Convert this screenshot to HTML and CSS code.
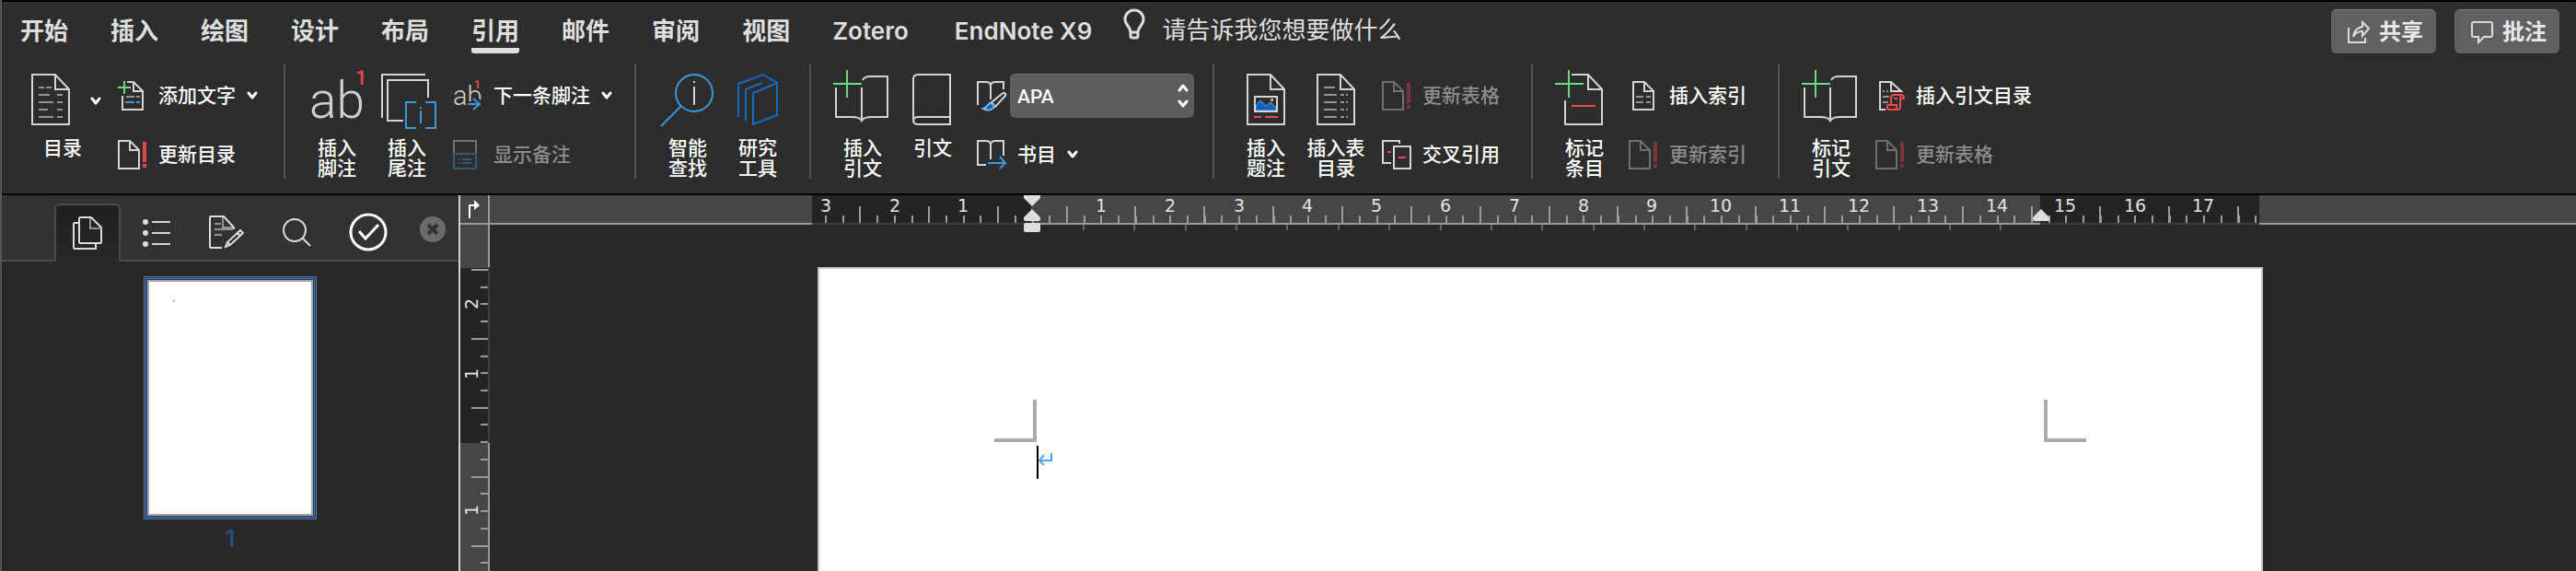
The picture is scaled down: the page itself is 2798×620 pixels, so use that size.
FILE: index.html
```html
<!DOCTYPE html>
<html lang="zh-CN">
<head>
<meta charset="utf-8">
<title>文档</title>
<link rel="stylesheet" href="styles.css">
</head>
<body>
<svg class="defs" aria-hidden="true">
  <symbol id="chevron" viewBox="0 0 12 10"><path class="chev" d="M2 2L6 7L10 2"/></symbol>
  <symbol id="doc-small" viewBox="0 0 32 32"><path class="ln" d="M1 1H13L23 11V31H1Z M13 1V11H23"/><path class="bang" d="M27 2h4v22h-4z M27 26h4v4h-4z"/></symbol>
  <symbol id="book-plus" viewBox="0 0 64 80"><path class="ln" d="M32 17Q34 13 40 13H59V57H42Q33 57 31 61Q29 57 20 57H3V25 M31 25V61"/><path class="green" d="M0 21H31 M15 6V36"/></symbol>
</svg>

<div class="app">
  <header class="ribbon">
    <div class="tabbar">
      <nav class="tabs">
        <button class="tab">开始</button>
        <button class="tab">插入</button>
        <button class="tab">绘图</button>
        <button class="tab">设计</button>
        <button class="tab">布局</button>
        <button class="tab active">引用</button>
        <button class="tab">邮件</button>
        <button class="tab">审阅</button>
        <button class="tab">视图</button>
        <button class="tab">Zotero</button>
        <button class="tab addin">EndNote X9</button>
      </nav>
      <button class="tellme">
        <svg width="24" height="34" viewBox="0 0 24 34"><path class="bulb" d="M8 25C8 19 2 17 2 11A10 10 0 0 1 22 11C22 17 16 19 16 25V29Q16 31 14 31H10Q8 31 8 29Z M8 25H16"/></svg>
        <span>请告诉我您想要做什么</span>
      </button>
      <div class="actions">
        <button class="action">
          <svg width="24" height="26" viewBox="0 0 24 26"><path class="thin" d="M1 8V24H19V19 M6 18C7 11 10 8 16 7V2L23 9L16 17V12C11 12 8 14 6 18Z"/></svg>
          <span>共享</span>
        </button>
        <button class="action">
          <svg width="24" height="26" viewBox="0 0 24 26"><path class="thin" d="M3 2H21Q23 2 23 4V16Q23 18 21 18H14L8 24V18H3Q1 18 1 16V4Q1 2 3 2Z"/></svg>
          <span>批注</span>
        </button>
      </div>
    </div>

    <div class="groups">
      <section class="group first">
        <button class="big toc">
          <span class="big-row">
            <svg width="42" height="80" viewBox="0 0 42 80"><path class="ln" d="M1 11H26L41 27V65H1Z M26 11V27H41"/><path class="gray" d="M8 25H14M16 25H22M8 33H20M28 33H34M8 41H24M28 41H34M8 49H18M28 49H34M8 57H24M28 57H34"/></svg>
            <svg width="12" height="10"><use href="#chevron"/></svg>
          </span>
          <span class="label">目录</span>
        </button>
        <div class="stack">
          <button class="small">
            <svg width="32" height="32" viewBox="0 0 32 32"><path class="ln" d="M10 1H17L27 11V31H5V16 M17 1V11H27"/><path class="gray" d="M9 17H18M20 17H24"/><path class="blue" d="M8 23H18M20 23H24"/><path class="green" d="M0 7H14M7 0V14"/></svg>
            <span>添加文字</span>
            <svg width="12" height="10"><use href="#chevron"/></svg>
          </button>
          <button class="small">
            <svg width="32" height="32"><use href="#doc-small"/></svg>
            <span>更新目录</span>
          </button>
        </div>
      </section>

      <section class="group">
        <button class="big">
          <svg width="64" height="80" viewBox="0 0 64 80"><text class="ab" x="2" y="58" font-size="55">ab</text><text class="sup" x="52" y="22" font-size="22">1</text></svg>
          <span class="label">插入<br>脚注</span>
        </button>
        <button class="big">
          <svg width="64" height="80" viewBox="0 0 64 80"><path class="ln" d="M5 58V11H52 M28 61H11V17H55V36"/><path class="blue" d="M42 41H31V69H42 M52 41H63V69H52 M47 46v2 M47 50v14"/></svg>
          <span class="label">插入<br>尾注</span>
        </button>
        <div class="stack">
          <button class="small">
            <svg width="32" height="32" viewBox="0 0 32 32"><text class="ab" x="0" y="26" font-size="29">ab</text><path class="cut" d="M14 25H30M23 18L30 25L23 32"/><text class="sup bold" x="23" y="8" font-size="12">1</text><path class="blue" d="M16 25H29M22 19L29 25L22 31"/></svg>
            <span>下一条脚注</span>
            <svg width="12" height="10"><use href="#chevron"/></svg>
          </button>
          <button class="small" disabled>
            <svg width="32" height="32" viewBox="0 0 32 32"><path class="ln" d="M1 14V1H25V14"/><path class="blue" d="M1 15H25V31H1Z M6 21H8M10 21H20M6 25H8M10 25H20"/></svg>
            <span>显示备注</span>
          </button>
        </div>
      </section>

      <section class="group">
        <button class="big">
          <svg width="64" height="80" viewBox="0 0 64 80"><circle class="blue" cx="39" cy="31" r="20"/><path class="blue" d="M25 45L3 67"/><path class="ln" d="M39 18v2 M39 24V44"/></svg>
          <span class="label">智能<br>查找</span>
        </button>
        <button class="big">
          <svg width="64" height="80" viewBox="0 0 64 80"><path class="deep" d="M27 31L53 20V55L27 65Z M19 61V27L37 20 M11 57V21L38 11L53 20"/></svg>
          <span class="label">研究<br>工具</span>
        </button>
      </section>

      <section class="group snug">
        <button class="big">
          <svg width="64" height="80"><use href="#book-plus"/></svg>
          <span class="label">插入<br>引文</span>
        </button>
        <button class="big">
          <svg width="64" height="80" viewBox="0 0 64 80"><path class="ln" d="M51 11H16Q11 11 11 16V60Q11 65 16 65H51Z M11 62Q11 57 16 57H51"/></svg>
          <span class="label">引文</span>
        </button>
        <div class="stack tight">
          <div class="style-row">
            <svg width="32" height="32" viewBox="0 0 32 32"><path class="ln" d="M1 26V1H10Q14 1 15 4Q16 1 20 1H29V9 M15 4V20"/><path class="brush" d="M30 13Q32 14 31 16L20 28L15 24L27 14Q29 12 30 13Z"/><path class="paint" d="M7 30Q10 29 12 26Q14 23 18 25Q20 28 17 30Q13 33 7 30Z"/></svg>
            <span class="picker">
              <select aria-label="引文样式"><option>APA</option></select>
              <svg class="steppers" width="14" height="28" viewBox="0 0 14 28"><path class="chev" d="M3 8L7 3L11 8M3 20L7 25L11 20"/></svg>
            </span>
          </div>
          <button class="small">
            <svg width="32" height="32" viewBox="0 0 32 32"><path class="ln" d="M10 27H1V1H10Q14 1 15 4Q16 1 20 1H29V17 M15 4V21"/><path class="blue" d="M12 25H31M25 18L31 25L25 31"/></svg>
            <span>书目</span>
            <svg width="12" height="10"><use href="#chevron"/></svg>
          </button>
        </div>
      </section>

      <section class="group wide">
        <button class="big">
          <svg width="42" height="80" viewBox="0 0 42 80"><path class="ln" d="M1 11H26L41 27V65H1Z M26 11V27H41"/><path class="mount" d="M10 50V45L15 39L21 45L26 41L32 47V50Z"/><rect class="sun" x="26" y="37" width="3" height="3"/><rect class="ln" x="9" y="35" width="24" height="16"/><path class="red" d="M8 57H16M20 57H34"/></svg>
          <span class="label">插入<br>题注</span>
        </button>
        <button class="big">
          <svg width="42" height="80" viewBox="0 0 42 80"><path class="ln" d="M1 11H26L41 27V65H1Z M26 11V27H41"/><path class="gray" d="M8 25H20M8 33H22M26 33H30M32 33H34M8 41H22M26 41H30M32 41H34M8 49H22M26 49H30M32 49H34M8 57H22M26 57H30M32 57H34"/></svg>
          <span class="label">插入表<br>目录</span>
        </button>
        <div class="stack">
          <button class="small" disabled>
            <svg width="32" height="32"><use href="#doc-small"/></svg>
            <span>更新表格</span>
          </button>
          <button class="small">
            <svg width="32" height="32" viewBox="0 0 32 32"><path class="ln" d="M10 25H1V1H19V4 M13 7H31V31H13Z"/><path class="red" d="M6 13H10M18 19H26"/></svg>
            <span>交叉引用</span>
          </button>
        </div>
      </section>

      <section class="group wide">
        <button class="big">
          <svg width="64" height="80" viewBox="0 0 64 80"><path class="ln" d="M18 11H36L51 27V65H11V39 M36 11V27H51"/><path class="red" d="M18 45H44"/><path class="green" d="M0 21H31 M15 6V36"/></svg>
          <span class="label">标记<br>条目</span>
        </button>
        <div class="stack tight">
          <button class="small">
            <svg width="32" height="32" viewBox="0 0 32 32"><path class="ln" d="M5 1H17L27 11V31H5Z M17 1V11H27"/><path class="gray" d="M8 17H16M19 17H24M8 23H16M19 23H24"/></svg>
            <span>插入索引</span>
          </button>
          <button class="small" disabled>
            <svg width="32" height="32"><use href="#doc-small"/></svg>
            <span>更新索引</span>
          </button>
        </div>
      </section>

      <section class="group">
        <button class="big">
          <svg width="64" height="80"><use href="#book-plus"/></svg>
          <span class="label">标记<br>引文</span>
        </button>
        <div class="stack tight">
          <button class="small">
            <svg width="32" height="32" viewBox="0 0 32 32"><path class="ln" d="M11 31H5V1H17L28 11H17V1"/><path class="gray" d="M8 11H10M12 11H14M8 17H15M8 23H14"/><path class="red" d="M17 25V18Q17 15 20 15H28Q31 15 31 18V19H27V28Q27 31 24 31H15Q13 31 13 29V26H23V28Q23 31 25 31M27 19V17Q27 15 29 15M20 19H24"/></svg>
            <span>插入引文目录</span>
          </button>
          <button class="small" disabled>
            <svg width="32" height="32"><use href="#doc-small"/></svg>
            <span>更新表格</span>
          </button>
        </div>
      </section>
    </div>
  </header>

  <main class="body">
    <aside class="pane">
      <div class="pane-tabs">
        <button class="pane-tab selected" aria-label="缩略图">
          <svg width="34" height="38" viewBox="0 0 34 38"><path class="thin" d="M7 8H3Q2 8 2 9V35Q2 36 3 36H26V31"/><path class="thin" d="M9 2H21L32 13V29Q32 30 31 30H9Q8 30 8 29V3Q8 2 9 2Z"/><path class="gray" d="M20 3V14H32"/></svg>
        </button>
        <div class="pane-tools">
          <button aria-label="标题"><svg width="30" height="32" viewBox="0 0 30 32"><path class="ln" d="M10 5H30M10 17H30M10 29H30"/><g class="dot"><circle cx="3" cy="5" r="3"/><circle cx="3" cy="17" r="3"/><circle cx="3" cy="29" r="3"/></g></svg></button>
          <button aria-label="修订"><svg width="38" height="38" viewBox="0 0 38 38"><path class="gray" d="M6 10H13M6 16H26M6 22H14M15 3V14H26"/><path class="faint" d="M6 28H14"/><path class="thin" d="M14 36H3Q1 36 1 35V3Q1 2 2 2H16L27 14V16"/><path class="thin" d="M34 17L37 20L23 33L18 35L20 30ZM31 20L34 23M20 30L23 33"/></svg></button>
          <button aria-label="查找"><svg width="30" height="32" viewBox="0 0 30 32"><circle class="thin" cx="13" cy="14" r="12"/><path class="thin" d="M22 23L30 31"/></svg></button>
          <button aria-label="校对"><svg width="42" height="42" viewBox="0 0 42 42"><circle class="check" cx="21" cy="21" r="19"/><path class="check" d="M11 20L18 28L32 13"/></svg></button>
        </div>
        <button class="pane-close" aria-label="关闭"><svg width="28" height="28" viewBox="0 0 28 28"><circle class="close-bg" cx="14" cy="14" r="14"/><path class="close-x" d="M9 9L19 19M19 9L9 19"/></svg></button>
      </div>
      <div class="thumbs">
        <div class="thumb"><span class="thumb-mark"></span></div>
        <span class="thumb-no">1</span>
      </div>
    </aside>

    <div class="vruler">
      <button class="tabstop" aria-label="制表符"><svg width="14" height="22" viewBox="0 0 14 22"><path class="stem" d="M2 21V7H8"/><path class="head" d="M7 1L13 7L7 12Z"/></svg></button>
      <svg class="vscale" width="32" height="376" viewBox="0 0 32 376">
        <rect class="light" width="32" height="376"/>
        <rect class="edge" x="30" width="2" height="376"/>
        <rect class="dark" y="47" width="30" height="190"/>
        <rect class="dark-edge" x="30" y="46" width="2" height="191"/>
        <path class="tick" stroke-width="8" stroke-dasharray="2 16.72" d="M26 48V376"/>
        <path class="tick" stroke-width="18" stroke-dasharray="2 72.88" d="M21 48V376"/>
        <g class="num"><text transform="translate(19 86) rotate(-90)">2</text><text transform="translate(19 162) rotate(-90)">1</text><text transform="translate(19 310) rotate(-90)">1</text></g>
      </svg>
    </div>

    <div class="work">
      <div class="hruler">
        <svg width="1572" height="42" viewBox="0 0 1572 42">
          <rect class="light" width="1572" height="30"/>
          <rect class="edge" y="30" width="1572" height="2"/>
          <rect class="dark" width="238" height="30"/>
          <rect class="dark" x="1334" width="238" height="30"/>
          <rect class="dark-edge" y="30" width="238" height="2"/>
          <rect class="dark-edge" x="1334" y="30" width="238" height="2"/>
          <path class="tick" stroke-width="8" stroke-dasharray="2 16.714" d="M14 26H1570"/>
          <path class="tick" stroke-width="18" stroke-dasharray="2 72.857" d="M51 21H1570"/>
          <path class="tick low" stroke-width="6" stroke-dasharray="2 53.36" d="M294 35H1294"/>
          <g class="num">
            <text x="15" y="18">3</text><text x="90" y="18">2</text><text x="164" y="18">1</text>
            <text x="314" y="18">1</text><text x="389" y="18">2</text><text x="464" y="18">3</text><text x="538" y="18">4</text><text x="613" y="18">5</text><text x="688" y="18">6</text><text x="763" y="18">7</text><text x="838" y="18">8</text><text x="912" y="18">9</text><text x="987" y="18">10</text><text x="1062" y="18">11</text><text x="1137" y="18">12</text><text x="1212" y="18">13</text><text x="1287" y="18">14</text><text x="1361" y="18">15</text><text x="1437" y="18">16</text><text x="1511" y="18">17</text>
          </g>
          <path class="marker" d="M230 0H248V3L239 12L230 3Z M239 15L248 24V26Q248 28 246 28H232Q230 28 230 26V24Z M232 30H246Q248 30 248 32V38Q248 40 246 40H232Q230 40 230 38V32Q230 30 232 30Z M1335 15L1344 24V26Q1344 28 1342 28H1328Q1326 28 1326 26V24Z"/>
        </svg>
      </div>
      <div class="canvas">
        <article class="paper">
          <div class="corners"><span class="corner left"></span><span class="corner right"></span></div>
          <div class="line"><span class="caret"></span><svg width="16" height="18" viewBox="0 0 16 18"><path class="ret" d="M14 2V10H1M6 4L1 10L6 15"/></svg></div>
        </article>
      </div>
    </div>
  </main>
</div>
</body>
</html>
```
FILE: styles.css
```css
* { box-sizing: border-box; }
body {
  margin: 0;
  background: #282828;
  color: #fff;
  font-family: Inter, "Noto Sans CJK SC", sans-serif;
}
button {
  margin: 0;
  padding: 0;
  border: 0;
  background: none;
  color: inherit;
  font: inherit;
}
svg { display: block; flex: none; fill: none; overflow: visible; }
.defs { position: absolute; width: 0; height: 0; }

.app {
  display: flex;
  flex-direction: column;
  height: 100vh;
  border-left: 2px solid #555;
  overflow: hidden;
}

/* icon strokes */
.ln { stroke: #d4d4d4; stroke-width: 2; }
.thin { stroke: #dcdcdc; stroke-width: 2; }
.gray { stroke: #939393; stroke-width: 2; }
.faint { stroke: #262626; stroke-width: 2; }
.blue { stroke: #3a9ade; stroke-width: 2; }
.deep { stroke: #156bbe; stroke-width: 2; }
.green { stroke: #6ddb82; stroke-width: 2; }
.red { stroke: #ec4a4d; stroke-width: 2; }
.cut { stroke: #2d2d2d; stroke-width: 6; }
.bang { fill: #e64548; }
.bulb { stroke: #dcdcdc; stroke-width: 3; }
.chev { stroke: #fff; stroke-width: 3; stroke-linecap: round; stroke-linejoin: round; }
.brush { fill: #2d2d2d; stroke: #d4d4d4; stroke-width: 2; }
.paint { fill: #0a64b8; stroke: #83bdf0; stroke-width: 2; }
.mount { fill: #0a64b8; stroke: #5ea9ea; stroke-width: 1; }
.sun { fill: #e8a04a; }
.ab { fill: #cfcfcf; font-family: Roboto, sans-serif; font-weight: 300; }
.sup { fill: #e64548; font-family: Roboto, sans-serif; }
.sup.bold { font-weight: 700; }
.dot { fill: #dcdcdc; }
.check { stroke: #fff; stroke-width: 3; }
.close-bg { fill: #6b6b6b; }
.close-x { stroke: #323232; stroke-width: 4; }

/* ribbon */
.ribbon {
  background: #2d2d2d;
  border-top: 2px solid #000;
  border-bottom: 2px solid #000;
  height: 212px;
  flex: none;
}
.tabbar {
  display: flex;
  align-items: flex-start;
  height: 68px;
  padding: 8px 18px 0 20px;
  color: #dedede;
}
.tabs { display: flex; gap: 46px; }
.tab {
  height: 48px;
  font-size: 26px;
  line-height: 46px;
  font-weight: 600;
  white-space: nowrap;
}
.tab.active {
  background: linear-gradient(#dedede, #dedede) bottom / 100% 6px no-repeat;
  border-radius: 3px;
}
.tab.addin { margin-left: 4px; }
.tellme {
  display: flex;
  align-items: flex-start;
  gap: 18px;
  margin-left: 34px;
  font-size: 26px;
  line-height: 46px;
}
.actions { display: flex; gap: 20px; margin-left: auto; }
.action {
  display: flex;
  align-items: center;
  gap: 10px;
  height: 48px;
  padding: 0 14px 0 18px;
  border-top: 1px solid #7c7c7c;
  border-radius: 6px;
  background: #616161;
  font-size: 24px;
  font-weight: 600;
  line-height: 46px;
  color: #e8e8e8;
}

.groups { display: flex; font-size: 21px; font-weight: 500; }
.group {
  display: flex;
  gap: 12px;
  height: 124px;
  padding: 0 24px;
  border-left: 2px solid #565656;
}
.group.first { padding: 0 28px 0 32px; border-left: 0; }
.group.snug { padding-right: 20px; }
.group.wide { padding-right: 34px; }
.big {
  display: flex;
  flex-direction: column;
  align-items: center;
  justify-content: flex-start;
  width: 64px;
  white-space: nowrap;
}
.big.toc { width: 76px; }
.big.toc .label { padding-right: 8px; }
.big-row { display: flex; align-items: center; gap: 22px; }
.label { line-height: 22px; text-align: center; }
.stack {
  display: flex;
  flex-direction: column;
  gap: 16px;
  padding: 10px 0 0 6px;
}
.stack.tight { padding-left: 4px; }
.small, .style-row {
  display: flex;
  align-items: center;
  height: 48px;
  white-space: nowrap;
}
.small { gap: 12px; line-height: 22px; }
.small:disabled { color: #8c8c8c; }
.small:disabled svg { opacity: 0.4; }
.style-row { gap: 4px; }
.picker { position: relative; }
.picker select {
  appearance: none;
  width: 200px;
  height: 48px;
  padding: 0 8px;
  border: 0;
  border-top: 1px solid #757575;
  border-radius: 6px;
  background: #5d5d5d;
  color: #fff;
  font: 500 21px Roboto, sans-serif;
}
.steppers { position: absolute; right: 5px; top: 10px; pointer-events: none; }

/* body */
.body { display: flex; flex: 1; min-height: 0; }
.pane { width: 498px; flex: none; border-right: 2px solid #cfcfcf; }
.pane-tabs {
  display: flex;
  height: 72px;
  padding: 9px 14px 0 57px;
  background: #323232;
  border-bottom: 2px solid #4a4a4a;
}
.pane-tab {
  display: flex;
  justify-content: center;
  width: 72px;
  margin-bottom: -2px;
  padding-top: 11px;
}
.pane-tab.selected {
  border: 2px solid #4a4a4a;
  border-bottom: 0;
  border-radius: 6px 6px 0 0;
  background: linear-gradient(#1f1f1f, #282828);
}
.pane-tools { display: flex; align-items: center; gap: 42px; margin-left: 24px; }
.pane-close { margin-left: auto; align-self: center; padding-bottom: 6px; }
.thumbs { display: flex; flex-direction: column; align-items: center; padding-top: 20px; }
.thumb {
  width: 180px;
  height: 256px;
  padding: 20px 26px;
  border: 2px solid #a2a6ae;
  background: #fff;
  box-shadow: 0 0 0 1px #2b3648, 0 0 0 2px #4a78b5, 0 0 0 3px #2b3648, 0 0 0 4px #4a78b5;
}
.thumb-mark { display: block; width: 2px; height: 2px; background: #8cc4f5; }
.thumb-no { margin-top: 12px; font-size: 26px; line-height: 26px; font-weight: 600; color: #264f80; }

/* rulers */
.light { fill: #464646; }
.dark { fill: #242424; }
.edge { fill: #989898; }
.dark-edge { fill: #3c3c3c; }
.tick { stroke: #9b9b9f; shape-rendering: crispEdges; }
.tick.low { stroke: #666; }
.num { fill: #e2e2e2; font: 19px "DejaVu Sans", sans-serif; text-anchor: middle; }
.marker { fill: #dedede; }
.stem { stroke: #fff; stroke-width: 2; }
.head { fill: #fff; }

.vruler { width: 32px; flex: none; }
.tabstop {
  display: flex;
  justify-content: center;
  width: 100%;
  height: 32px;
  padding-top: 4px;
  background: #464646;
  border-right: 2px solid #989898;
  border-bottom: 2px solid #989898;
}
.work { display: flex; flex-direction: column; flex: 1; min-width: 0; }
.hruler {
  display: flex;
  justify-content: center;
  height: 42px;
  padding-left: 6px;
  background: linear-gradient(#464646 30px, #989898 30px, #989898 32px, #282828 32px);
}
.canvas {
  display: flex;
  justify-content: center;
  flex: 1;
  min-height: 0;
  padding: 36px 0 0 16px;
}
.paper {
  flex: 0 1 1570px;
  padding-top: 142px;
  border: 2px solid #c4c4c4;
  border-bottom: 0;
  background: #fff;
}
.corners { display: flex; justify-content: space-between; padding: 0 190px; }
.corner { width: 46px; height: 46px; border-bottom: 4px solid #ababab; }
.corner.left { border-right: 4px solid #ababab; }
.corner.right { border-left: 4px solid #ababab; }
.line { display: flex; padding: 4px 0 0 236px; }
.line svg { margin-top: 6px; }
.caret { width: 2px; height: 36px; background: #000; }
.ret { stroke: #4aa8fa; stroke-width: 2; }
```
